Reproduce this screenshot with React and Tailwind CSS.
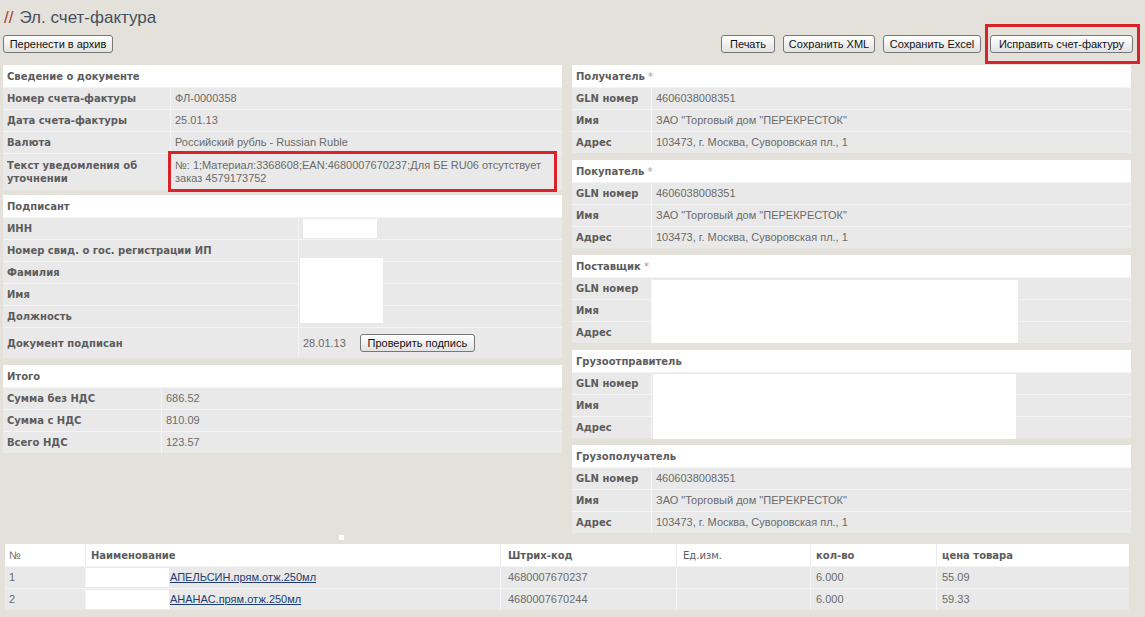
import React from "react";

const LBL = "font-['DejaVu_Sans',sans-serif] font-bold text-[10px] text-[#5c5c5c]";
const VAL = "font-['Liberation_Sans',Arial,sans-serif] text-[11px] text-[#6b6b6b]";
const BTN =
  "h-[18px] rounded-[3px] border border-[#777777] bg-linear-to-b from-white to-[#e2e2e2] font-['Liberation_Sans',Arial,sans-serif] text-[11px] text-[#111111] leading-none flex items-center justify-center";

function Header({ title, star }) {
  return (
    <div className={"h-[22px] bg-white flex items-center px-[4px] " + LBL}>
      {title}
      {star && <span className="ml-[3px] text-[#a0a0a0] font-normal">*</span>}
    </div>
  );
}

function Row({ label, children, lw, h = "h-[22px]" }) {
  return (
    <div className={"flex border-t border-[#f4f4f4] bg-[#e9e9e9] " + h}>
      <div className={"shrink-0 flex items-center px-[4px] border-r border-[#f4f4f4] leading-[13px] " + lw + " " + LBL}>
        {label}
      </div>
      <div className={"flex-1 flex items-center px-[4px] leading-[13px] " + VAL}>{children}</div>
    </div>
  );
}

function Party({ title, star, empty, box }) {
  return (
    <div>
      <Header title={title} star={star} />
      <div className="relative">
        <Row label="GLN номер" lw="w-[80px]">{empty ? "" : "4606038008351"}</Row>
        <Row label="Имя" lw="w-[80px]">{empty ? "" : 'ЗАО "Торговый дом "ПЕРЕКРЕСТОК"'}</Row>
        <Row label="Адрес" lw="w-[80px]">{empty ? "" : "103473, г. Москва, Суворовская пл., 1"}</Row>
        {box}
      </div>
    </div>
  );
}

export default function App() {
  return (
    <div className="w-[1145px] h-[617px] overflow-hidden bg-[#e4e1db] font-['Liberation_Sans',Arial,sans-serif]">
      {/* title */}
      <div className="h-[35px] flex items-center pl-[4px] text-[17px]">
        <span className="text-[#a8403a]">//</span>
        <span className="ml-[6px] text-[#44505f]">Эл. счет-фактура</span>
      </div>
      {/* buttons */}
      <div className="h-[18px] flex pl-[3px]">
        <button className={BTN + " w-[110px]"}>Перенести в архив</button>
        <div className="flex-1" />
        <button className={BTN + " w-[54px]"}>Печать</button>
        <button className={BTN + " w-[92px] ml-[8px]"}>Сохранить XML</button>
        <button className={BTN + " w-[98px] ml-[8px]"}>Сохранить Excel</button>
        <div className="relative ml-[9px] mr-[12px]">
          <button className={BTN + " w-[143px]"}>Исправить счет-фактуру</button>
          <div className="absolute left-[-5px] top-[-11px] right-[-7px] bottom-[-11px] border-[3px] border-[#d8232a] pointer-events-none" />
        </div>
      </div>

      {/* main columns */}
      <div className="mt-[12px] flex pl-[3px] gap-[10px]">
        {/* left */}
        <div className="w-[559px] flex flex-col">
          <div>
            <Header title="Сведение о документе" />
            <Row label="Номер счета-фактуры" lw="w-[168px]">ФЛ-0000358</Row>
            <Row label="Дата счета-фактуры" lw="w-[168px]">25.01.13</Row>
            <Row label="Валюта" lw="w-[168px]">Российский рубль - Russian Ruble</Row>
            <div className="flex border-t border-[#f4f4f4] bg-[#e9e9e9] h-[37px]">
              <div className={"shrink-0 w-[168px] flex items-center px-[4px] border-r border-[#f4f4f4] leading-[13px] " + LBL}>
                Текст уведомления об уточнении
              </div>
              <div className={"relative flex-1 flex items-center px-[4px] leading-[13px] " + VAL}>
                <span>№: 1;Материал:3368608;EAN:4680007670237;Для БЕ RU06 отсутствует заказ 4579173752</span>
                <div className="absolute left-[-3px] top-[-3px] right-[5px] bottom-[-2px] border-[3px] border-[#d8232a]" />
              </div>
            </div>
          </div>

          <div className="mt-[5px]">
            <Header title="Подписант" />
            <div className="relative">
              <Row label="ИНН" lw="w-[296px]" />
              <Row label="Номер свид. о гос. регистрации ИП" lw="w-[296px]" />
              <Row label="Фамилия" lw="w-[296px]" />
              <Row label="Имя" lw="w-[296px]" />
              <Row label="Должность" lw="w-[296px]" />
              <Row label="Документ подписан" lw="w-[296px]" h="h-[31px]">
                <span>28.01.13</span>
                <button className={BTN + " w-[115px] ml-[14px]"}>Проверить подпись</button>
              </Row>
              <div className="absolute left-[300px] top-[2px] w-[74px] h-[19px] bg-white" />
              <div className="absolute left-[297px] top-[41px] w-[83px] h-[65px] bg-white" />
            </div>
          </div>

          <div className="mt-[7px]">
            <Header title="Итого" />
            <Row label="Сумма без НДС" lw="w-[159px]">686.52</Row>
            <Row label="Сумма с НДС" lw="w-[159px]">810.09</Row>
            <Row label="Всего НДС" lw="w-[159px]">123.57</Row>
          </div>
        </div>

        {/* right */}
        <div className="w-[559px] flex flex-col gap-[7px]">
          <Party title="Получатель" star />
          <Party title="Покупатель" star />
          <Party
            title="Поставщик"
            star
            empty
            box={<div className="absolute left-[80px] top-[3px] w-[366px] h-[63px] bg-white" />}
          />
          <Party
            title="Грузоотправитель"
            empty
            box={<div className="absolute left-[81px] top-[2px] w-[363px] h-[65px] bg-white" />}
          />
          <Party title="Грузополучатель" />
        </div>
      </div>

      {/* spacer with tiny mark */}
      <div className="h-[9px]">
        <div className="ml-[339px] mt-[2px] w-[5px] h-[5px] bg-white" />
      </div>

      {/* items table */}
      <div className="ml-[5px] w-[1124px]">
        <div className="grid grid-cols-[80px_415px_176px_134px_126px_193px] h-[22px] bg-white">
          <div className={"flex items-center px-[4px] " + VAL}>№</div>
          <div className={"flex items-center px-[5px] border-l border-[#ececec] " + LBL}>Наименование</div>
          <div className={"flex items-center px-[7px] border-l border-[#ececec] " + LBL}>Штрих-код</div>
          <div className={"flex items-center px-[6px] border-l border-[#ececec] " + LBL + " font-normal"}>Ед.изм.</div>
          <div className={"flex items-center px-[5px] border-l border-[#ececec] " + LBL}>кол-во</div>
          <div className={"flex items-center px-[5px] border-l border-[#ececec] " + LBL}>цена товара</div>
        </div>
        {[
          ["1", "АПЕЛЬСИН.прям.отж.250мл", "4680007670237", "6.000", "55.09"],
          ["2", "АНАНАС.прям.отж.250мл", "4680007670244", "6.000", "59.33"],
        ].map((r) => (
          <div
            key={r[0]}
            className="grid grid-cols-[80px_415px_176px_134px_126px_193px] h-[22px] bg-[#e9e9e9] border-t border-[#f4f4f4]"
          >
            <div className={"flex items-center px-[4px] " + VAL}>{r[0]}</div>
            <div className="flex items-center border-l border-[#f4f4f4]">
              <div className="w-[83px] h-[19px] bg-white" />
              <a className="ml-[1px] text-[11px] text-[#1e3d73] underline font-['Liberation_Sans',Arial,sans-serif]">
                {r[1]}
              </a>
            </div>
            <div className={"flex items-center px-[7px] border-l border-[#f4f4f4] " + VAL}>{r[2]}</div>
            <div className="border-l border-[#f4f4f4]" />
            <div className={"flex items-center px-[5px] border-l border-[#f4f4f4] " + VAL}>{r[3]}</div>
            <div className={"flex items-center px-[5px] border-l border-[#f4f4f4] " + VAL}>{r[4]}</div>
          </div>
        ))}
      </div>
    </div>
  );
}
